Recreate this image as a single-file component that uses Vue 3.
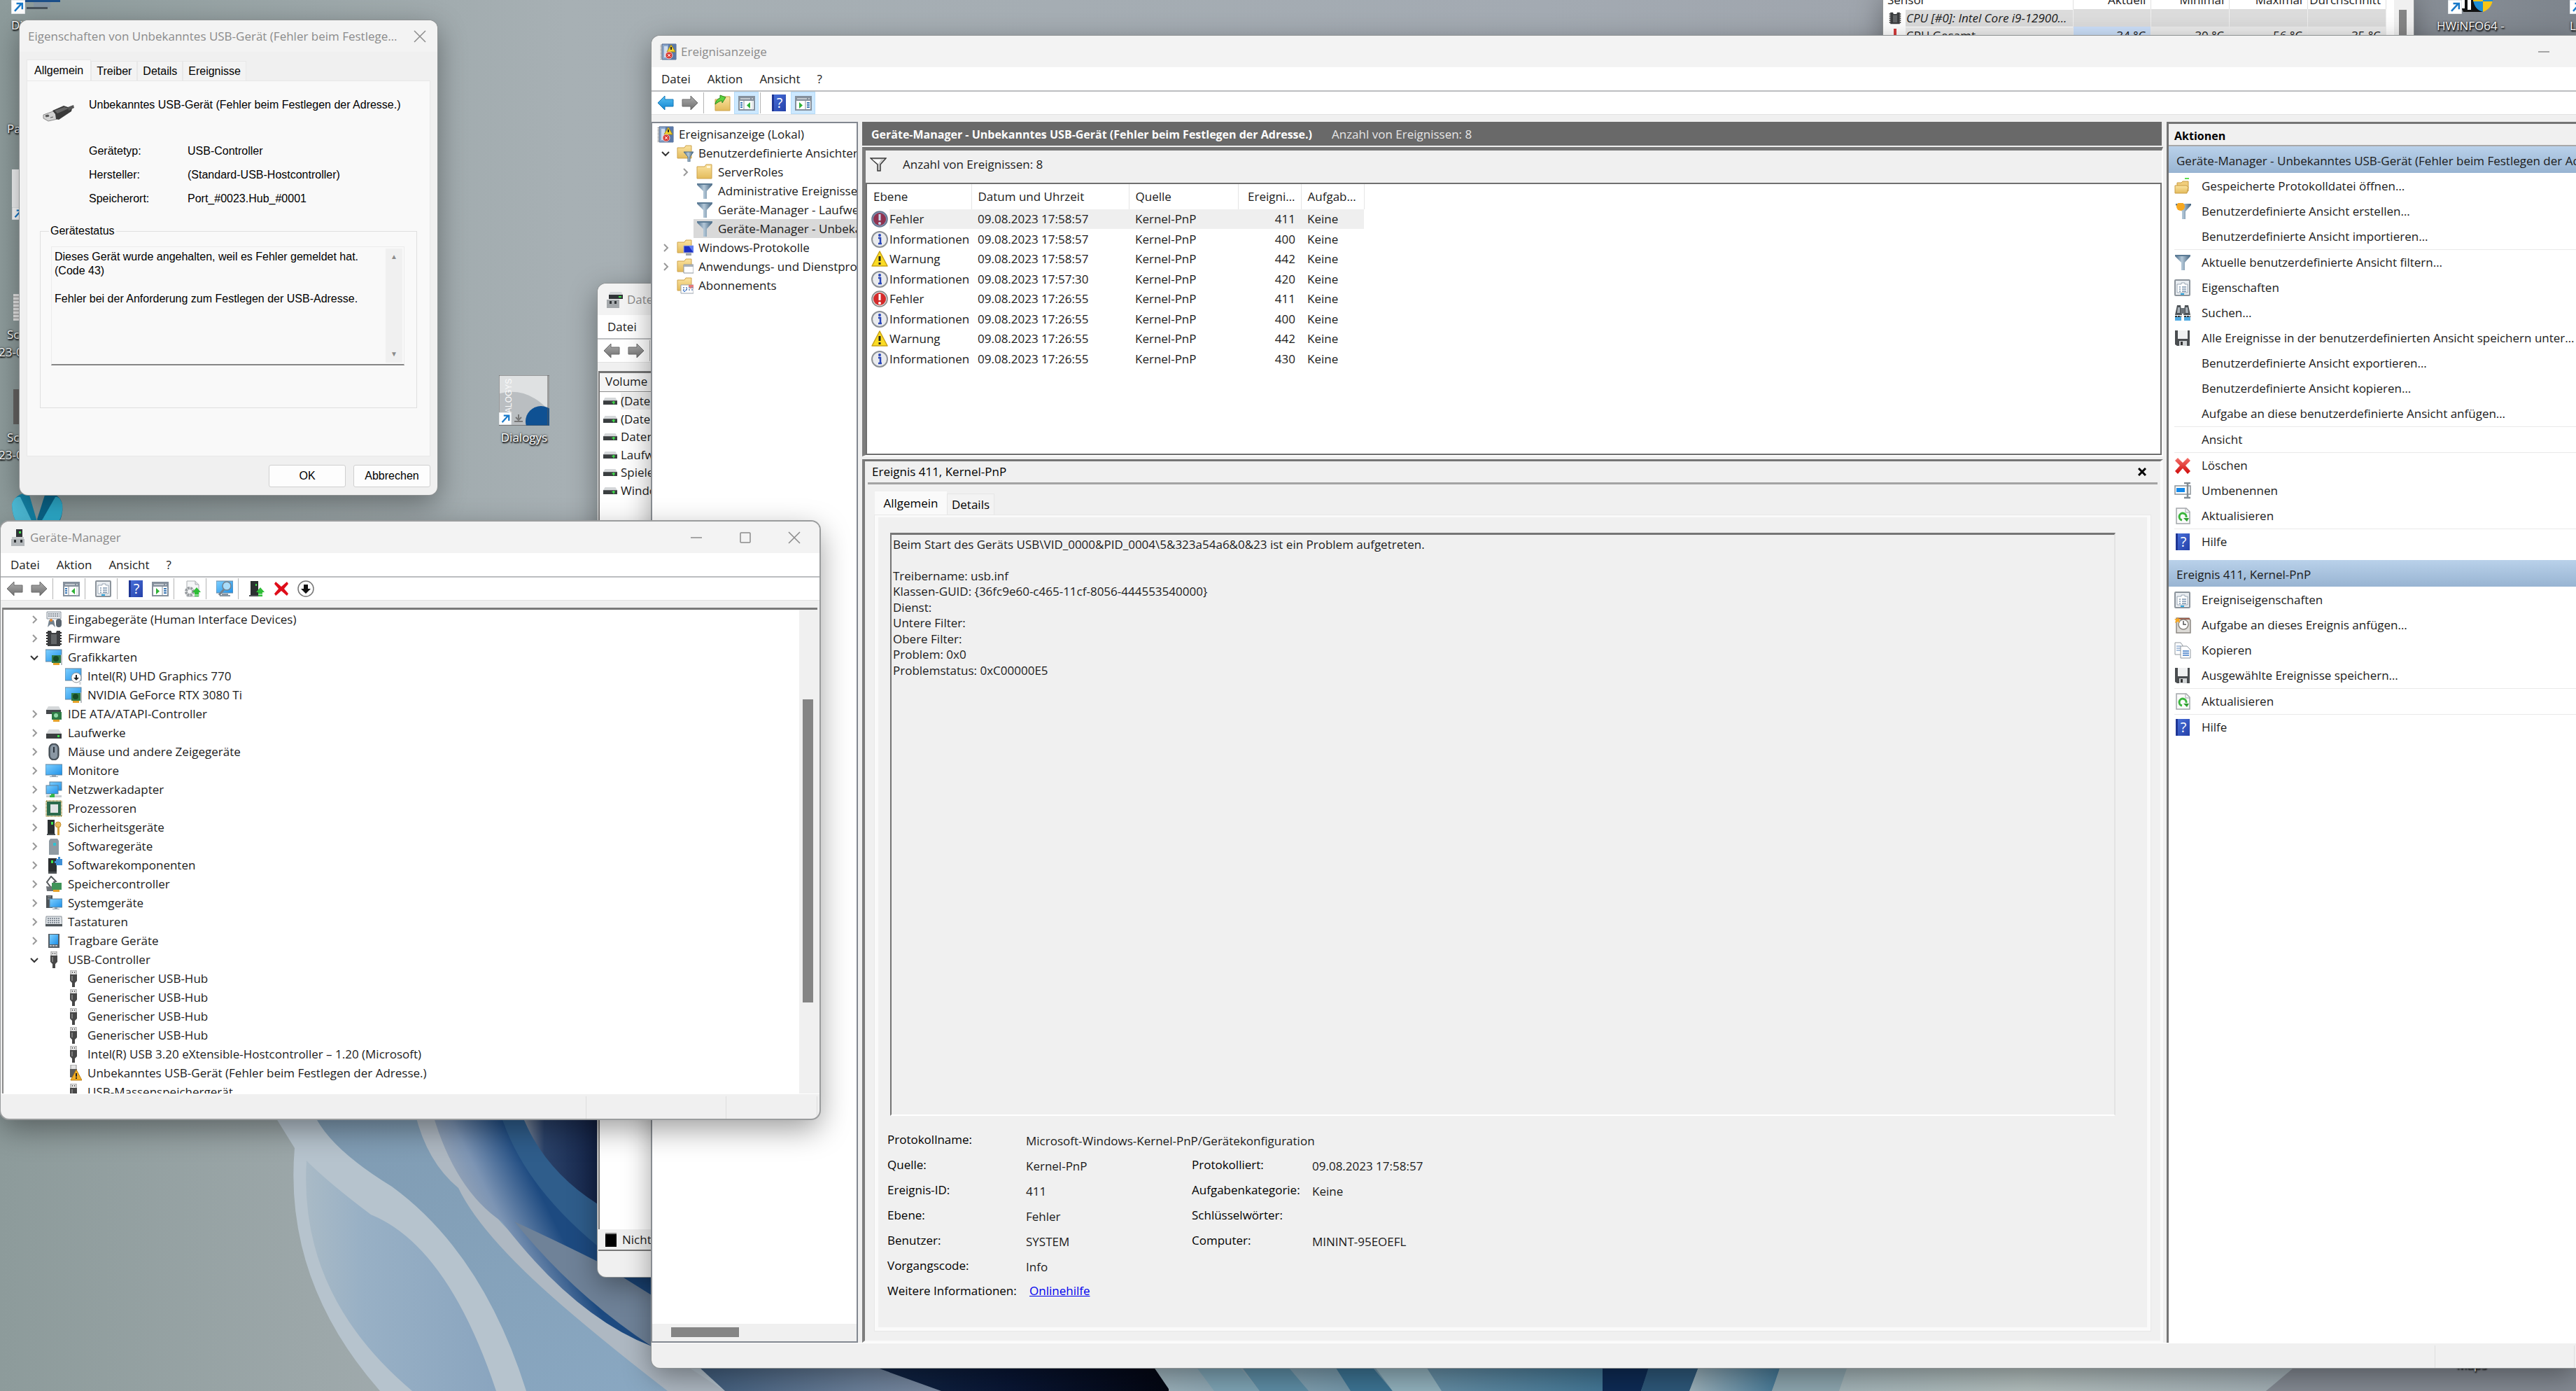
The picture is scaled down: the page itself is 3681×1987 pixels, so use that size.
<script setup>
const tabs = ['Allgemein', 'Treiber', 'Details', 'Ereignisse']

const deviceInfo = [
  ['Gerätetyp:', 'USB-Controller'],
  ['Hersteller:', '(Standard-USB-Hostcontroller)'],
  ['Speicherort:', 'Port_#0023.Hub_#0001'],
]

const statusText =
  'Dieses Gerät wurde angehalten, weil es Fehler gemeldet hat.\n(Code 43)\n\nFehler bei der Anforderung zum Festlegen der USB-Adresse.'

const menu = ['Datei', 'Aktion', 'Ansicht', '?']

const deviceTools = [
  ['back', 'Zurück'], ['fwd', 'Vorwärts'], null,
  ['panel-l', 'Konsolenstruktur'], null,
  ['props', 'Eigenschaften'], null,
  ['help', 'Hilfe'], ['panel-r', 'Aktionsbereich'], null,
  ['update', 'Treiber aktualisieren'], null,
  ['scan', 'Nach geänderter Hardware suchen'], null,
  ['addhw', 'Gerät aktivieren'], ['redx', 'Gerät deinstallieren'], ['down', 'Gerät deaktivieren'],
]

const devices = [
  ['hid', 'Eingabegeräte (Human Interface Devices)'],
  ['chip', 'Firmware'],
  ['gpu', 'Grafikkarten', 'open'],
  ['gpudown', 'Intel(R) UHD Graphics 770', 'child'],
  ['gpu', 'NVIDIA GeForce RTX 3080 Ti', 'child'],
  ['ide', 'IDE ATA/ATAPI-Controller'],
  ['drive', 'Laufwerke'],
  ['mouse', 'Mäuse und andere Zeigegeräte'],
  ['monitor', 'Monitore'],
  ['net', 'Netzwerkadapter'],
  ['cpu', 'Prozessoren'],
  ['sec', 'Sicherheitsgeräte'],
  ['swdev', 'Softwaregeräte'],
  ['swcomp', 'Softwarekomponenten'],
  ['mem', 'Speichercontroller'],
  ['sys', 'Systemgeräte'],
  ['kbd', 'Tastaturen'],
  ['phone', 'Tragbare Geräte'],
  ['usb', 'USB-Controller', 'open'],
  ['usb', 'Generischer USB-Hub', 'child'],
  ['usb', 'Generischer USB-Hub', 'child'],
  ['usb', 'Generischer USB-Hub', 'child'],
  ['usb', 'Generischer USB-Hub', 'child'],
  ['usb', 'Intel(R) USB 3.20 eXtensible-Hostcontroller – 1.20 (Microsoft)', 'child'],
  ['usbwarn', 'Unbekanntes USB-Gerät (Fehler beim Festlegen der Adresse.)', 'child'],
  ['usb', 'USB-Massenspeichergerät', 'child'],
]

const volumes = ['(Datenträger 0 Partition 1)', '(Datenträger 0 Partition 4)', 'Daten', 'Laufwerk', 'Spiele', 'Windows']

const eventTree = [
  { icon: 'log', text: 'Ereignisanzeige (Lokal)', level: 0 },
  { icon: 'ffilter', text: 'Benutzerdefinierte Ansichten', level: 1, mark: 'open' },
  { icon: 'folder', text: 'ServerRoles', level: 2, mark: 'closed' },
  { icon: 'funnel', text: 'Administrative Ereignisse', level: 2 },
  { icon: 'funnel', text: 'Geräte-Manager - Laufwerke', level: 2 },
  { icon: 'funnel', text: 'Geräte-Manager - Unbekanntes', level: 2, selected: true },
  { icon: 'fwin', text: 'Windows-Protokolle', level: 1, mark: 'closed' },
  { icon: 'fapp', text: 'Anwendungs- und Dienstprotokolle', level: 1, mark: 'closed' },
  { icon: 'fcal', text: 'Abonnements', level: 1 },
]

const events = [
  ['errsel', 'Fehler', '09.08.2023 17:58:57', 411],
  ['info', 'Informationen', '09.08.2023 17:58:57', 400],
  ['warn', 'Warnung', '09.08.2023 17:58:57', 442],
  ['info', 'Informationen', '09.08.2023 17:57:30', 420],
  ['error', 'Fehler', '09.08.2023 17:26:55', 411],
  ['info', 'Informationen', '09.08.2023 17:26:55', 400],
  ['warn', 'Warnung', '09.08.2023 17:26:55', 442],
  ['info', 'Informationen', '09.08.2023 17:26:55', 430],
]

const message = [
  'Beim Start des Geräts USB\\VID_0000&PID_0004\\5&323a54a6&0&23 ist ein Problem aufgetreten.',
  '',
  'Treibername: usb.inf',
  'Klassen-GUID: {36fc9e60-c465-11cf-8056-444553540000}',
  'Dienst:',
  'Untere Filter:',
  'Obere Filter:',
  'Problem: 0x0',
  'Problemstatus: 0xC00000E5',
]

const fields = [
  ['Protokollname:', 'Microsoft-Windows-Kernel-PnP/Gerätekonfiguration'],
  ['Quelle:', 'Kernel-PnP', 'Protokolliert:', '09.08.2023 17:58:57'],
  ['Ereignis-ID:', '411', 'Aufgabenkategorie:', 'Keine'],
  ['Ebene:', 'Fehler', 'Schlüsselwörter:', ''],
  ['Benutzer:', 'SYSTEM', 'Computer:', 'MININT-95EOEFL'],
  ['Vorgangscode:', 'Info'],
]

const actionGroups = [
  {
    title: 'Geräte-Manager - Unbekanntes USB-Gerät (Fehler beim Festlegen der Adresse.)',
    items: [
      ['openlog', 'Gespeicherte Protokolldatei öffnen…'],
      ['funnelnew', 'Benutzerdefinierte Ansicht erstellen…'],
      ['', 'Benutzerdefinierte Ansicht importieren…'],
      null,
      ['funnel', 'Aktuelle benutzerdefinierte Ansicht filtern…'],
      ['props', 'Eigenschaften'],
      ['find', 'Suchen…'],
      ['save', 'Alle Ereignisse in der benutzerdefinierten Ansicht speichern unter…'],
      ['', 'Benutzerdefinierte Ansicht exportieren…'],
      ['', 'Benutzerdefinierte Ansicht kopieren…'],
      ['', 'Aufgabe an diese benutzerdefinierte Ansicht anfügen…'],
      null,
      ['', 'Ansicht'],
      null,
      ['delete', 'Löschen'],
      ['rename', 'Umbenennen'],
      ['refresh', 'Aktualisieren'],
      null,
      ['help', 'Hilfe'],
    ],
  },
  {
    title: 'Ereignis 411, Kernel-PnP',
    items: [
      ['props', 'Ereigniseigenschaften'],
      ['task', 'Aufgabe an dieses Ereignis anfügen…'],
      ['copy', 'Kopieren'],
      ['save', 'Ausgewählte Ereignisse speichern…'],
      null,
      ['refresh', 'Aktualisieren'],
      null,
      ['help', 'Hilfe'],
    ],
  },
]
</script>

<template>
  <div class="desktop">
    <svg class="wallpaper" viewBox="0 0 3681 1987" preserveAspectRatio="none" aria-hidden="true">
      <defs>
        <linearGradient id="w-base" x1="0" x2="1" y1="0" y2="0">
          <stop offset="0" stop-color="#8d9b9b" /><stop offset=".12" stop-color="#9ca7a9" />
          <stop offset=".22" stop-color="#a7b0b4" /><stop offset=".6" stop-color="#a3aab2" />
          <stop offset=".85" stop-color="#9ba0a8" /><stop offset="1" stop-color="#7d848c" />
        </linearGradient>
        <linearGradient id="w-petal" x1="0" x2="1" y1="0" y2="0">
          <stop offset="0" stop-color="#a9bac6" /><stop offset=".3" stop-color="#98b0c5" /><stop offset="1" stop-color="#8aa5bf" />
        </linearGradient>
        <linearGradient id="w-petal2" x1="0" x2="1" y1="0" y2="1">
          <stop offset="0" stop-color="#7f9bb2" /><stop offset="1" stop-color="#8aa8c2" />
        </linearGradient>
        <linearGradient id="w-blue" gradientUnits="userSpaceOnUse" x1="620" x2="740" y1="1700" y2="1640">
          <stop offset="0" stop-color="#aab0b8" /><stop offset=".5" stop-color="#7d95b4" /><stop offset="1" stop-color="#1d4a80" />
        </linearGradient>
        <linearGradient id="w-navy" x1="0" x2="1" y1="0" y2="0">
          <stop offset="0" stop-color="#8c97a6" /><stop offset=".3" stop-color="#2b4269" /><stop offset="1" stop-color="#142449" />
        </linearGradient>
        <linearGradient id="w-slate" x1="0" x2="1" y1="0" y2="0">
          <stop offset="0" stop-color="#3d5a7a" /><stop offset=".6" stop-color="#6d829c" /><stop offset="1" stop-color="#8390a6" />
        </linearGradient>
        <linearGradient id="w-black" x1="0" x2="1" y1="0" y2="0">
          <stop offset="0" stop-color="#13294a" /><stop offset=".5" stop-color="#091634" /><stop offset="1" stop-color="#030612" />
        </linearGradient>
        <linearGradient id="w-fan" x1="0" x2="1" y1="0" y2="0">
          <stop offset="0" stop-color="#9fb4bd" /><stop offset="1" stop-color="#3f7595" />
        </linearGradient>
        <linearGradient id="w-pale" x1="0" x2="1" y1="0" y2="0">
          <stop offset="0" stop-color="#a5b6ba" /><stop offset=".4" stop-color="#b4c0bf" /><stop offset="1" stop-color="#a2afb6" />
        </linearGradient>
      </defs>
      <rect width="3681" height="1987" fill="url(#w-base)" />
      <path d="M390 1590L421 1640Q405 1830 543 1987H1100V1590Z" fill="#b6c3cd" />
      <path d="M438 1658Q426 1850 589 1987H709Q640 1780 530 1735Q470 1690 438 1658Z" fill="url(#w-petal)" />
      <path d="M448 1590Q470 1640 560 1695Q690 1790 752 1987H960L593 1590Z" fill="url(#w-petal2)" />
      <path d="M593 1590Q610 1660 655 1697Q690 1770 821 1880Q880 1930 954 1987H1036Q900 1900 788 1813Q660 1710 622 1590Z" fill="#aeb8c2" />
      <path d="M618 1590Q650 1700 717 1745Q820 1880 931 1923V1590Z" fill="url(#w-blue)" />
      <path d="M715 1590Q745 1690 854 1780V1590Z" fill="#2f5d8b" />
      <path d="M745 1590Q775 1670 854 1720V1590Z" fill="url(#w-navy)" />
      <path d="M735 1745Q790 1770 854 1802L931 1850V1923Q820 1850 735 1745Z" fill="#6f8298" />
      <path d="M985 1940H1400V1987H1036Z" fill="url(#w-slate)" />
      <path d="M1215 1940H1670V1987H1345Z" fill="url(#w-black)" />
      <path d="M1640 1940L1672 1987H2320V1940Z" fill="url(#w-fan)" />
      <path d="M1700 1940L1735 1987H1800L1760 1940Z" fill="#7fa5b6" />
      <path d="M1765 1940L1800 1987H1870L1830 1940Z" fill="#5e8ea6" />
      <path d="M1900 1940L1930 1987H1990L1950 1940Z" fill="#3d7595" />
      <path d="M1955 1940L1990 1987H2060L2030 1940Z" fill="#93b3bf" />
      <path d="M2290 1940H2362L2345 1987H2290Z" fill="#0e2b55" />
      <path d="M2360 1940H2432L2415 1987H2345Z" fill="#2e587a" />
      <path d="M2432 1940H2550L2532 1987H2414Z" fill="url(#w-fan)" />
      <path d="M2548 1940H2646L2628 1987H2532Z" fill="#8fa8b1" />
      <path d="M2644 1940H3300L3238 1987H2628Z" fill="url(#w-pale)" />
      <path d="M3294 1940H3681V1987H3238Z" fill="#858b94" />
    </svg>

    <!-- icon sheet -->
    <svg class="sheet" aria-hidden="true">
      <defs>
        <linearGradient id="g-screen" x1="0" y1="0" x2="1" y2="1"><stop offset="0" stop-color="#7fd0ff" /><stop offset="1" stop-color="#1e90e8" /></linearGradient>
        <linearGradient id="g-fold" x1="0" y1="0" x2="0" y2="1"><stop offset="0" stop-color="#fbe3a0" /><stop offset="1" stop-color="#e3bb5c" /></linearGradient>
        <linearGradient id="g-fun" x1="0" y1="0" x2="1" y2="0"><stop offset="0" stop-color="#4a6c8a" /><stop offset=".45" stop-color="#b4c8d8" /><stop offset="1" stop-color="#3f5f7b" /></linearGradient>
        <linearGradient id="g-arrow" x1="0" y1="0" x2="0" y2="1"><stop offset="0" stop-color="#adadad" /><stop offset="1" stop-color="#6f6f6f" /></linearGradient>
        <linearGradient id="g-barrow" x1="0" y1="0" x2="0" y2="1"><stop offset="0" stop-color="#5cc4f5" /><stop offset="1" stop-color="#0f83cf" /></linearGradient>
        <linearGradient id="g-red" x1="0" y1="0" x2="0" y2="1"><stop offset="0" stop-color="#f4706a" /><stop offset="1" stop-color="#cf0a0a" /></linearGradient>
        <linearGradient id="g-book" x1="0" y1="0" x2="1" y2="1"><stop offset="0" stop-color="#4a72dc" /><stop offset="1" stop-color="#2440a8" /></linearGradient>
      </defs>
      <symbol id="i-back" viewBox="0 0 24 24"><path d="M1 12L11 2v5h12v10H11v5z" fill="url(#g-arrow)" stroke="#6a6a6a" /></symbol>
      <symbol id="i-fwd" viewBox="0 0 24 24"><path d="M23 12L13 2v5H1v10h12v5z" fill="url(#g-arrow)" stroke="#6a6a6a" /></symbol>
      <symbol id="i-backblue" viewBox="0 0 24 24"><path d="M1 12L11 2v5h12v10H11v5z" fill="url(#g-barrow)" stroke="#1478b8" /></symbol>
      <symbol id="i-panel-l" viewBox="0 0 24 24"><rect x="1" y="3" width="22" height="19" fill="#fff" stroke="#85909c" stroke-width="2" /><path d="M1 3h22v6H1z" fill="#85909c" /><path d="M3 6h14M19 6h2" stroke="#fff" /><path d="M8 9v13" stroke="#85909c" /><path d="M3 12h3M3 15h3M3 18h3" stroke="#3b78b5" stroke-width="2" /><path d="M17 11v9l-5-4.500z" fill="#2eb135" /><path d="M20 9v13" stroke="#c3cad1" /></symbol>
      <symbol id="i-panel-r" viewBox="0 0 24 24"><rect x="1" y="3" width="22" height="19" fill="#fff" stroke="#85909c" stroke-width="2" /><path d="M1 3h22v6H1z" fill="#85909c" /><path d="M3 6h14M19 6h2" stroke="#fff" /><path d="M15 9v13" stroke="#85909c" /><path d="M17 12h4M17 15h4M17 18h4" stroke="#3b78b5" stroke-width="2" /><path d="M6 11v9l5-4.500z" fill="#2eb135" /></symbol>
      <symbol id="i-props" viewBox="0 0 24 24"><rect x="1" y="1" width="21" height="22" rx="1" fill="#e9edf1" stroke="#8b939b" stroke-width="2" /><path d="M4 7h6v-2h5v2h4v12H4z" fill="#fff" stroke="#9aa7b5" /><path d="M7 11h2M11 11h6M7 14h2M11 14h6M7 17h2M11 17h6" stroke="#7a93ad" stroke-width="1.500" /><path d="M9 21h5" stroke="#2fa7e0" stroke-width="2" /></symbol>
      <symbol id="i-help" viewBox="0 0 24 24"><path d="M2 0h20v24H2z" fill="url(#g-book)" /><path d="M2 0h3v24H2z" fill="#1f3694" /><text x="13" y="19" text-anchor="middle" font-family="Open Sans, sans-serif" font-size="20" fill="#fff">?</text></symbol>
      <symbol id="i-update" viewBox="0 0 24 24"><path d="M4 1h12l5 5v17H4z" fill="#f5f6f7" stroke="#a9adb1" /><path d="M16 1v5h5" fill="#dde0e3" stroke="#a9adb1" /><circle cx="8" cy="16" r="5" fill="none" stroke="#979b9f" stroke-width="4" stroke-dasharray="3 1" /><path d="M18 10l6 7h-3v6h-6v-6h-3z" fill="#2ebd36" /><path d="M15 21h6" stroke="#fff" /></symbol>
      <symbol id="i-scan" viewBox="0 0 24 24"><rect x="0" y="1" width="24" height="17" fill="url(#g-screen)" stroke="#6c8aa3" /><path d="M8 19h9v2h3v2H5v-2h3z" fill="#8795a2" /><circle cx="15" cy="8" r="6" fill="#a9dcfa" stroke="#73828f" stroke-width="1.500" /><path d="M11 13l-7 8" stroke="#73828f" stroke-width="3" /></symbol>
      <symbol id="i-addhw" viewBox="0 0 24 24"><path d="M3 1h11v20H3z" fill="#2b2f31" /><path d="M1 21h14v2H1z" fill="#4b5053" /><path d="M10 5h2v3h-2z" fill="#3fe04a" /><path d="M17 10l6 7h-3v6h-6v-6h-3z" fill="#2ebd36" /><path d="M14 20h6" stroke="#fff" /></symbol>
      <symbol id="i-redx" viewBox="0 0 24 24"><path d="M4 2l8 7 8-7 2 3-6 7 6 7-2 3-8-7-8 7-2-3 6-7-6-7z" fill="#df0d1a" /></symbol>
      <symbol id="i-down" viewBox="0 0 24 24"><circle cx="12" cy="12" r="11" fill="#fff" stroke="#777" stroke-width="1.500" /><path d="M9 6h6v6h4l-7 7-7-7h4z" fill="#111" /></symbol>
      <symbol id="i-hid" viewBox="0 0 24 24"><path d="M2 1h20v10H2z" fill="#e3e6ea" stroke="#8d969f" /><path d="M4 4h16M4 7h16" stroke="#8d969f" stroke-dasharray="2 1" stroke-width="2" /><path d="M3 23l2-10h7l2 10-4-4H7z" fill="#74828f" /><circle cx="8" cy="13" r="2" fill="#e2852f" /><rect x="15" y="11" width="8" height="12" rx="4" fill="#59636d" /></symbol>
      <symbol id="i-chip" viewBox="0 0 24 24"><path d="M3 1h5l1 3h6l1-3h5v22H3z" fill="#3b3d3f" /><path d="M2 3v20M22 3v20" stroke="#222" stroke-width="2" stroke-dasharray="2 2" /><path d="M8 6h8v14H8z" fill="#626567" /></symbol>
      <symbol id="i-gpu" viewBox="0 0 24 24"><rect x="0" y="1" width="23" height="17" fill="url(#g-screen)" stroke="#63829c" /><path d="M9 9h14v11H9z" fill="#2f7a44" /><circle cx="15" cy="14" r="4" fill="#174a26" /><path d="M11 20h9v3h-9z" fill="#e6a32a" /><path d="M23 8v15" stroke="#b9bec2" stroke-width="2" /></symbol>
      <symbol id="i-gpudown" viewBox="0 0 24 24"><rect x="0" y="1" width="23" height="17" fill="url(#g-screen)" stroke="#63829c" /><path d="M20 20h3v4h-3z" fill="#d8dcdf" /><circle cx="16" cy="14" r="7" fill="#fff" stroke="#8b9094" /><path d="M15 10h2v4h3l-4 4-4-4h3z" fill="#222" /></symbol>
      <symbol id="i-ide" viewBox="0 0 24 24"><path d="M4 1h15l3 5H1z" fill="#d5d8da" /><path d="M1 6h21v6H1z" fill="#45494c" /><path d="M9 9h14v11H9z" fill="#2f7a44" /><circle cx="15" cy="14" r="3" fill="#8fd8a4" /><path d="M11 20h9v3h-9z" fill="#e6a32a" /></symbol>
      <symbol id="i-drive" viewBox="0 0 24 24"><path d="M5 7h14l4 6H1z" fill="#d5d8da" /><path d="M1 13h22v7H1z" fill="#3a3e40" /><path d="M17 15h3v3h-3z" fill="#3fe04a" /></symbol>
      <symbol id="i-vol" viewBox="0 0 24 24"><path d="M3 6h18l3 5H0z" fill="#d5d8da" /><path d="M0 11h24v7H0z" fill="#3a3e40" /><path d="M15 14h5M18 12v5" stroke="#3fe04a" stroke-width="2" /></symbol>
      <symbol id="i-mouse" viewBox="0 0 24 24"><rect x="5" y="0" width="14" height="24" rx="7" fill="#56616b" stroke="#2b3238" /><rect x="7" y="2" width="10" height="20" rx="5" fill="#8a97a3" /><path d="M12 5v8" stroke="#29313a" stroke-width="2" /></symbol>
      <symbol id="i-monitor" viewBox="0 0 24 24"><rect x="0" y="3" width="24" height="15" fill="url(#g-screen)" stroke="#5e8099" /><path d="M9 18h6v2h3v1H6v-1h3z" fill="#8fa0ae" /></symbol>
      <symbol id="i-net" viewBox="0 0 24 24"><rect x="6" y="1" width="17" height="12" fill="url(#g-screen)" stroke="#5e8099" /><rect x="1" y="6" width="17" height="12" fill="url(#g-screen)" stroke="#5e8099" /><path d="M1 20h22v3H1z" fill="#c9ced2" /><path d="M8 18h5v5H6v-3h2z" fill="#34b54a" /></symbol>
      <symbol id="i-cpu" viewBox="0 0 24 24"><rect x="1" y="1" width="22" height="22" fill="none" stroke="#9b8c3c" stroke-width="2" stroke-dasharray="1 1" /><rect x="2" y="2" width="20" height="20" fill="#2c6b4d" /><rect x="7" y="6" width="11" height="12" fill="#e1e4e5" /></symbol>
      <symbol id="i-sec" viewBox="0 0 24 24"><path d="M3 1h10v20H3z" fill="#2b2f31" /><path d="M2 21h12v2H2z" fill="#4b5053" /><path d="M8 4h3v4H8z" fill="#3fe04a" /><circle cx="18" cy="8" r="4" fill="#e9bb5c" stroke="#c48d2c" /><path d="M17 12h3v11h-3z" fill="#dba43c" /></symbol>
      <symbol id="i-swdev" viewBox="0 0 24 24"><path d="M7 1h10l2 3v20H5V4z" fill="#8f9aa2" /><path d="M11 7h4v4h-4z" fill="#2fc2d2" /></symbol>
      <symbol id="i-swcomp" viewBox="0 0 24 24"><path d="M4 2h12v19H4z" fill="#2b2f31" /><path d="M4 21h12v3H4z" fill="#4b5053" /><path d="M8 5h3v4H8z" fill="#3fe04a" /><path d="M15 3h3V0h3v3h3v9h-9V9h-2V6h2z" fill="#3e8fd6" /></symbol>
      <symbol id="i-mem" viewBox="0 0 24 24"><path d="M8 1l7 7-3 1 2 3-6 5-6-8z" fill="none" stroke="#55595c" stroke-width="2" /><path d="M1 15l10 1v6H2z" fill="#6e7377" /><path d="M9 10h14v10H9z" fill="#3f9458" /><path d="M11 20h9v3h-9z" fill="#e6a32a" /></symbol>
      <symbol id="i-sys" viewBox="0 0 24 24"><path d="M1 1h9v18H1z" fill="#4d5357" /><path d="M3 3h5M3 6h5" stroke="#a7adb1" /><rect x="6" y="6" width="18" height="12" fill="url(#g-screen)" stroke="#5e8099" /><path d="M13 18h4v2h3v1h-10v-1h3z" fill="#8fa0ae" /></symbol>
      <symbol id="i-kbd" viewBox="0 0 24 24"><path d="M1 4h22l1 14H0z" fill="#dfe3e7" stroke="#8a929a" /><path d="M3 7h18M3 10h18M3 13h18" stroke="#87919b" stroke-width="2" stroke-dasharray="2 1" /><path d="M0 15h24v3H0z" fill="#4d5357" /></symbol>
      <symbol id="i-phone" viewBox="0 0 24 24"><rect x="4" y="2" width="16" height="20" fill="#555d64" /><rect x="6" y="3" width="12" height="14" fill="url(#g-screen)" /><path d="M6 19h12" stroke="#b7bec4" stroke-width="2" stroke-dasharray="3 1" /></symbol>
      <symbol id="i-usb" viewBox="0 0 24 24"><path d="M8 0h8v7H8z" fill="#e3e3e3" stroke="#8d8d8d" /><path d="M10 2h1v2h-1zM13 2h1v2h-1z" fill="#555" /><path d="M7 6h10v9l-3 3v6h-4v-6l-3-3z" fill="#474747" /><path d="M9 8h2v7H9z" fill="#7c7c7c" /></symbol>
      <symbol id="i-usbwarn" viewBox="0 0 24 24"><path d="M8 0h8v7H8z" fill="#e3e3e3" stroke="#8d8d8d" /><path d="M7 6h10v9l-3 3H7z" fill="#5b5b5b" /><path d="M16 7l8 15H8z" fill="#f2ae24" stroke="#b97b0c" /><path d="M16 12v5M16 18v2" stroke="#222" stroke-width="2" /></symbol>
      <symbol id="i-log" viewBox="0 0 24 24"><path d="M3 1h20v22H3z" fill="#8ba7cc" stroke="#4c6690" /><path d="M12 1h11v22H12z" fill="#5b79a8" /><path d="M6 4h5v16H6z" fill="#cfdcee" /><path d="M2 2v21" stroke="#999" stroke-width="3" stroke-dasharray="1 1" /><path d="M16 2l6 10H10z" fill="#f3d32d" stroke="#ad8a12" /><path d="M16 5v4" stroke="#222" stroke-width="2" /><circle cx="13" cy="17" r="5" fill="#d83a34" stroke="#f4c9c7" /><path d="M11 15l4 4M15 15l-4 4" stroke="#fff" /></symbol>
      <symbol id="i-folder" viewBox="0 0 24 24"><path d="M1 4h11l2-3h8v20H1z" fill="url(#g-fold)" stroke="#cda24a" /><path d="M15 3h5v3h-5z" fill="#fff6d8" /></symbol>
      <symbol id="i-ffilter" viewBox="0 0 24 24"><path d="M1 4h10l2-3h8v18H1z" fill="url(#g-fold)" stroke="#cda24a" /><path d="M10 10h14l-5 7v7h-3v-7z" fill="url(#g-fun)" stroke="#4f6f8b" /></symbol>
      <symbol id="i-fwin" viewBox="0 0 24 24"><path d="M1 4h10l2-3h8v18H1z" fill="url(#g-fold)" stroke="#cda24a" /><path d="M10 9h14v10H10z" fill="#1b2fc4" stroke="#a9b3d8" /><path d="M17 9h7v10z" fill="#5f7cf0" /><path d="M13 20h8v3h-8z" fill="#9ea5ab" /></symbol>
      <symbol id="i-fapp" viewBox="0 0 24 24"><path d="M1 4h10l2-3h8v18H1z" fill="url(#g-fold)" stroke="#cda24a" /><path d="M10 9h14v12H10z" fill="#fff" stroke="#8b939b" /><path d="M10 9h14v3H10z" fill="#a7afb7" /></symbol>
      <symbol id="i-fcal" viewBox="0 0 24 24"><path d="M1 4h10l2-3h8v18H1z" fill="url(#g-fold)" stroke="#cda24a" /><path d="M6 11h18v12H6z" fill="#fff" stroke="#9aa3ac" /><path d="M17 11h7v5h-7z" fill="#e57a7a" /><path d="M9 15h14M9 18h14" stroke="#8aa0c4" stroke-dasharray="2 2" stroke-width="2" /><path d="M9 18l2 3 4-5" fill="none" stroke="#2a6bc8" /></symbol>
      <symbol id="i-folderup" viewBox="0 0 24 24"><path d="M2 7h10l2-4h9v20H2z" fill="url(#g-fold)" stroke="#cda24a" /><path d="M2 14c1-6 4-8 7-9V1l8 3-5 8V9c-4 0-6 2-10 5z" fill="#5dd13f" stroke="#2f8a1e" /></symbol>
      <symbol id="i-funnel" viewBox="0 0 24 24"><path d="M1 1h22v2l-8 9v11h-5V12L1 3z" fill="url(#g-fun)" /><path d="M1 1h22v2H1z" fill="#5b7b95" /></symbol>
      <symbol id="i-funnelgrey" viewBox="0 0 24 24"><path d="M1 3h22l-8 9v9h-4v-9z" fill="#cfcfcf" stroke="#3a3a3a" stroke-width="1.500" /><path d="M4 5h12l-4 6z" fill="#fff" /></symbol>
      <symbol id="i-funnelnew" viewBox="0 0 24 24"><path d="M2 1h22v2l-8 9v11h-5V12L2 3z" fill="url(#g-fun)" /><circle cx="9" cy="5" r="6" fill="#f6a821" /></symbol>
      <symbol id="i-error" viewBox="0 0 24 24"><circle cx="12" cy="12" r="11" fill="#d6d6d6" stroke="#858585" stroke-width="1.500" /><circle cx="12" cy="12" r="9" fill="#d42a2a" /><path d="M12 5v9" stroke="#fff" stroke-width="3" /><circle cx="12" cy="18" r="2" fill="#fff" /></symbol>
      <symbol id="i-errsel" viewBox="0 0 24 24"><circle cx="12" cy="12" r="11" fill="#7e93b4" stroke="#64748c" stroke-width="1.500" /><circle cx="12" cy="12" r="9" fill="#8f3250" /><path d="M12 5v9" stroke="#c5d5ea" stroke-width="3" /><circle cx="12" cy="18" r="2" fill="#c5d5ea" /></symbol>
      <symbol id="i-info" viewBox="0 0 24 24"><circle cx="12" cy="12" r="11" fill="#e9ebee" stroke="#8b8f94" stroke-width="2" /><circle cx="12" cy="6" r="2" fill="#2743b8" /><path d="M10 10h3v8M10 18h5" fill="none" stroke="#2743b8" stroke-width="2.500" /></symbol>
      <symbol id="i-warn" viewBox="0 0 24 24"><path d="M12 1l11 21H1z" fill="#fbdc24" stroke="#c9a116" stroke-width="1.500" stroke-linejoin="round" /><path d="M12 8v7M12 17v3" stroke="#222" stroke-width="3" /></symbol>
      <symbol id="i-openlog" viewBox="0 0 24 24"><path d="M4 7h6l2-2h8v14H4z" fill="#f0cd7c" stroke="#c99c42" /><path d="M1 11h16l3 2-2 9H1z" fill="url(#g-fold)" stroke="#c99c42" /><path d="M15 1h6" stroke="#5fdc50" stroke-width="2" /></symbol>
      <symbol id="i-find" viewBox="0 0 24 24"><path d="M4 1h5l2 14H1zM15 1h5l3 14H13z" fill="#4c5257" /><path d="M5 4h3v8H4zM16 4h3l1 8h-4z" fill="#aab2b9" /><path d="M9 5h6v8H9z" fill="#6b7278" /><path d="M1 17h9v6H1zM14 17h9v6h-9z" fill="#4fa9e0" /><path d="M1 17h9M14 17h9" stroke="#333" stroke-width="2" stroke-dasharray="3 1" /></symbol>
      <symbol id="i-save" viewBox="0 0 24 24"><path d="M1 1h21v22H4l-3-2z" fill="#4a4d50" /><path d="M5 1h14v12H5z" fill="#f0f1f2" /><path d="M7 16h11v7H7z" fill="#d0d3d5" /><path d="M9 17h3v5H9z" fill="#333" /></symbol>
      <symbol id="i-delete" viewBox="0 0 24 24"><path d="M5 1l7 7 7-7 4 4-7 7 7 8-4 4-7-8-7 8-4-4 7-8-7-7z" fill="url(#g-red)" /></symbol>
      <symbol id="i-rename" viewBox="0 0 24 24"><rect x="1" y="5" width="22" height="12" fill="#fff" stroke="#8a9299" stroke-width="1.500" /><path d="M3 8h12v6H3z" fill="#1489ea" /><path d="M14 1h9M14 22h9M19 1v21" stroke="#808a92" stroke-width="2.500" /></symbol>
      <symbol id="i-refresh" viewBox="0 0 24 24"><path d="M3 1h14l5 5v17H3z" fill="#fafafa" stroke="#a3a7ab" stroke-width="1.500" /><path d="M16 1v6h6" fill="none" stroke="#a3a7ab" /><path d="M11 18a5 5 0 1 1 6-4" fill="none" stroke="#3bb53c" stroke-width="3" /><path d="M13 15h8l-3 5z" fill="#2e9e30" /></symbol>
      <symbol id="i-task" viewBox="0 0 24 24"><path d="M3 2h18l2 3v18H3z" fill="#dcdad6" stroke="#8c8882" stroke-width="1.500" /><path d="M4 2h18v2H4z" fill="#9b5b4a" /><circle cx="13" cy="11" r="7" fill="#fff" stroke="#8c8882" stroke-width="1.500" /><path d="M13 6v5h4" fill="none" stroke="#555" stroke-width="1.500" /><path d="M5 0l1 3h3L7 5l1 4-3-2-4 2 1-4-2-2h4z" fill="#f7a823" /></symbol>
      <symbol id="i-copy" viewBox="0 0 24 24"><path d="M1 1h8l3 4v13H1z" fill="#fff" stroke="#8f979f" /><path d="M3 6h6M3 9h6M3 12h6" stroke="#5a87c0" /><path d="M9 6h9l5 5v12H9z" fill="#fff" stroke="#8f979f" /><path d="M12 13h9M12 16h9M12 19h9" stroke="#3976c4" stroke-width="1.500" /></symbol>
      <symbol id="i-devmgr" viewBox="0 0 24 24"><path d="M10 0h9v12h-9z" fill="#303437" /><path d="M14 3h3v3h-3z" fill="#3fe04a" /><path d="M4 11h17v4H4z" fill="#c6c9cb" /><path d="M3 14h19v10H3z" fill="#b3b7ba" /><path d="M7 15h3v4H7zM16 15h3v4h-3z" fill="#303437" /></symbol>
      <symbol id="i-diskmgr" viewBox="0 0 24 24"><path d="M6 1h16l2 4H4z" fill="#d5d8da" /><path d="M4 5h20v6H4z" fill="#303437" /><path d="M18 7h4v2h-4z" fill="#3fe04a" /><path d="M1 12h18v12H1z" fill="#a4a8ab" /><path d="M5 14h3v4H5zM12 14h3v4h-3z" fill="#303437" /></symbol>
      <symbol id="i-shortcut" viewBox="0 0 24 24"><path d="M0 0h24v24H0z" fill="#fff" stroke="#b9c4cb" /><path d="M6 19L17 7M9 6h10v10" fill="none" stroke="#1879c9" stroke-width="3" /></symbol>
      <symbol id="i-min" viewBox="0 0 24 24"><path d="M4 12h16" stroke="#8b8b8b" stroke-width="1.500" /></symbol>
      <symbol id="i-max" viewBox="0 0 24 24"><rect x="5" y="5" width="14" height="14" rx="1" fill="none" stroke="#8b8b8b" stroke-width="1.500" /></symbol>
      <symbol id="i-close" viewBox="0 0 24 24"><path d="M4 4l16 16M20 4L4 20" stroke="#8b8b8b" stroke-width="1.500" /></symbol>
    </svg>

    <!-- desktop shortcuts -->
    <div class="shortcut s-monitor">
      <svg width="72" height="24" viewBox="0 0 72 24"><path d="M18 0h52v3H18z" fill="#1c4f8a" /><path d="M32 3h24v8H32z" fill="#8695a3" /><path d="M22 10h30v3H22z" fill="#49535c" /></svg>
      <svg class="arrow" width="20" height="20"><use href="#i-shortcut" /></svg>
      <span>Di</span>
    </div>
    <div class="shortcut s-pa"><span>Pa</span></div>
    <div class="shortcut s-white">
      <div class="tile white"></div>
      <svg class="arrow" width="18" height="18"><use href="#i-shortcut" /></svg>
    </div>
    <div class="shortcut s-shot1"><div class="tile lines"></div><span>Sc</span><span class="second">23-0</span></div>
    <div class="shortcut s-shot2"><div class="tile dark"></div><span>Sc</span><span class="second">23-0</span></div>
    <div class="shortcut s-ribbon">
      <svg width="74" height="50" viewBox="0 0 74 50"><path d="M0 18Q6 2 24 2L38 50H10Q0 36 0 18z" fill="#1486ab" /><path d="M0 18Q4 6 12 8L32 50H10Q0 36 0 18z" fill="#4fc0dc" /><path d="M72 18Q68 2 48 2L36 40 44 50H64Q74 36 72 18z" fill="#0b6a90" /><path d="M72 18Q68 6 62 8L38 50H62Q74 36 72 18z" fill="#2fb4d6" /></svg>
    </div>
    <div class="shortcut s-dialogys">
      <svg width="72" height="72" viewBox="0 0 72 72">
        <path d="M0 0h72v72H0z" fill="#dfe1e2" stroke="#555" /><path d="M1 26Q40 16 71 50V71H1z" fill="#babec1" /><circle cx="60" cy="66" r="22" fill="#0f5193" /><path d="M70 0v72H0" fill="none" stroke="#555" />
        <text class="cover" x="-54" y="18" transform="rotate(-90)" font-family="Liberation Sans, sans-serif" font-size="12" fill="#fafafa">ALOGYS</text>
        <path d="M28 56v6M24 60l4 4 4-4M22 66h12" fill="none" stroke="#777" stroke-width="2" />
      </svg>
      <svg class="arrow" width="18" height="18"><use href="#i-shortcut" /></svg>
      <span>Dialogys</span>
    </div>
    <div class="shortcut s-hwinfo">
      <svg width="68" height="20" viewBox="0 0 68 20"><path d="M16 0h36v17H24z" fill="#111" /><path d="M20 0h6v12h-6zM30 0h5v14h-5z" fill="#fff" /><path d="M38 0h14v17Q40 14 38 0z" fill="#1f8ed6" /><path d="M52 0h14q-2 13-14 17z" fill="#f5c518" /><path d="M38 2h14V0h-14z" fill="#f5c518" /><path d="M52 2h14V0H52z" fill="#1f8ed6" /></svg>
      <svg class="arrow" width="20" height="20"><use href="#i-shortcut" /></svg>
      <span>HWiNFO64 -</span>
    </div>
    <div class="shortcut s-edge">
      <svg width="20" height="20"><use href="#i-shortcut" /></svg>
      <span>L</span>
    </div>
    <div class="shortcut s-maps"><span>Maps</span></div>

    <!-- sensor window -->
    <section class="window sensors">
      <table>
        <thead>
          <tr><th>Sensor</th><th>Aktuell</th><th>Minimal</th><th>Maximal</th><th>Durchschnitt</th></tr>
        </thead>
        <tbody>
          <tr class="cpu">
            <td><div><svg width="18" height="24"><use href="#i-chip" /></svg><i>CPU [#0]: Intel Core i9-12900…</i></div></td><td></td><td></td><td></td><td></td>
          </tr>
          <tr class="val">
            <td><div><b></b><span>CPU Gesamt</span></div></td><td class="now">34 °C</td><td>30 °C</td><td>56 °C</td><td>35 °C</td>
          </tr>
        </tbody>
      </table>
      <div class="sbar"><i></i></div>
    </section>

    <!-- disk management -->
    <section class="window disks">
      <header class="title"><svg width="24" height="24"><use href="#i-diskmgr" /></svg><span>Datenträgerverwaltung</span></header>
      <nav class="menu"><button type="button">Datei</button></nav>
      <div class="tools">
        <button type="button" aria-label="Zurück"><svg><use href="#i-back" /></svg></button>
        <button type="button" aria-label="Vorwärts"><svg><use href="#i-fwd" /></svg></button>
        <i class="sep"></i>
      </div>
      <div class="volumes">
        <div class="vhead">Volume</div>
        <ul><li v-for="v in volumes" :key="v"><svg width="20" height="20"><use href="#i-vol" /></svg><span>{{ v }}</span></li></ul>
      </div>
      <div class="legend"><i></i><span>Nicht zugeordnet</span></div>
      <footer></footer>
    </section>

    <!-- device properties -->
    <section class="window dialog">
      <header class="title">
        <span>Eigenschaften von Unbekanntes USB-Gerät (Fehler beim Festlege…</span>
        <button type="button" aria-label="Schließen"><svg width="24" height="24"><use href="#i-close" /></svg></button>
      </header>
      <div class="ptabs"><button v-for="(t, i) in tabs" :key="t" type="button" :class="{ on: i === 0 }">{{ t }}</button></div>
      <div class="page">
        <div class="device">
          <svg width="46" height="26" viewBox="0 0 46 26"><path d="M1 16l14-5 6 4v7L8 25l-7-4z" fill="#d2d2d2" stroke="#8a8a8a" /><path d="M4 17l4-1 1 2-4 1zM11 20l4-1" stroke="#555" fill="#555" /><path d="M14 10L30 3l12 4-1 4-18 12-4-1-1-7z" fill="#3a3a3a" /><path d="M36 5l8-3 1 4-8 4z" fill="#555" /><path d="M17 10l14-5 6 2-16 7z" fill="#666" /></svg>
          <span>Unbekanntes USB-Gerät (Fehler beim Festlegen der Adresse.)</span>
        </div>
        <dl><div v-for="r in deviceInfo" :key="r[0]"><dt>{{ r[0] }}</dt><dd>{{ r[1] }}</dd></div></dl>
        <fieldset>
          <legend>Gerätestatus</legend>
          <div class="status">
            <textarea readonly aria-label="Gerätestatus" :value="statusText"></textarea>
            <div class="sb"><span>▲</span><span>▼</span></div>
          </div>
        </fieldset>
      </div>
      <div class="buttons"><button type="button">OK</button><button type="button">Abbrechen</button></div>
    </section>

    <!-- event viewer -->
    <section class="window viewer">
      <header class="title">
        <svg width="24" height="24"><use href="#i-log" /></svg><span>Ereignisanzeige</span>
        <button type="button" aria-label="Minimieren"><svg width="24" height="24"><use href="#i-min" /></svg></button>
      </header>
      <nav class="menu"><button v-for="m in menu" :key="m" type="button">{{ m }}</button></nav>
      <div class="tools">
        <button type="button" aria-label="Zurück"><svg><use href="#i-backblue" /></svg></button>
        <button type="button" aria-label="Vorwärts"><svg><use href="#i-fwd" /></svg></button>
        <i class="sep"></i>
        <button type="button" class="gap" aria-label="Nach oben"><svg><use href="#i-folderup" /></svg></button>
        <button type="button" class="lit" aria-label="Konsolenstruktur"><svg><use href="#i-panel-l" /></svg></button>
        <i class="sep"></i>
        <button type="button" class="gap" aria-label="Hilfe"><svg><use href="#i-help" /></svg></button>
        <button type="button" class="lit" aria-label="Aktionsbereich"><svg><use href="#i-panel-r" /></svg></button>
      </div>
      <div class="main">
        <aside class="tree">
          <ul>
            <li v-for="n in eventTree" :key="n.text" :class="['l' + n.level, { sel: n.selected }]">
              <svg v-if="n.level" class="chev" width="16" height="16" viewBox="0 0 16 16">
                <path v-if="n.mark === 'open'" d="M3 6l5 5 5-5" stroke="#333" /><path v-else-if="n.mark" d="M6 3l5 5-5 5" stroke="#999" />
              </svg>
              <div class="node"><svg width="24" height="24"><use :href="'#i-' + n.icon" /></svg><span>{{ n.text }}</span></div>
            </li>
          </ul>
          <div class="hbar"><i></i></div>
        </aside>

        <div class="center">
          <h1><b>Geräte-Manager - Unbekanntes USB-Gerät (Fehler beim Festlegen der Adresse.)</b><span>Anzahl von Ereignissen: 8</span></h1>
          <div class="listpane">
            <div class="count"><svg width="24" height="24"><use href="#i-funnelgrey" /></svg><span>Anzahl von Ereignissen: 8</span></div>
            <div class="grid">
              <table>
                <thead><tr><th>Ebene</th><th>Datum und Uhrzeit</th><th>Quelle</th><th class="num">Ereigni…</th><th>Aufgab…</th></tr></thead>
                <tbody>
                  <tr v-for="(e, i) in events" :key="i" :class="{ sel: i === 0 }">
                    <td><div><svg width="24" height="24"><use :href="'#i-' + e[0]" /></svg><span>{{ e[1] }}</span></div></td>
                    <td>{{ e[2] }}</td><td>Kernel-PnP</td><td class="num">{{ e[3] }}</td><td>Keine</td>
                  </tr>
                </tbody>
              </table>
            </div>
          </div>
          <div class="detail">
            <div class="dhead"><span>Ereignis 411, Kernel-PnP</span><button type="button" aria-label="Schließen"><svg width="12" height="12" viewBox="0 0 12 12"><path d="M1 1l10 10M11 1L1 11" stroke="#000" stroke-width="3" /></svg></button></div>
            <div class="dtabs"><button type="button" class="on">Allgemein</button><button type="button">Details</button></div>
            <div class="dpage">
              <div class="msg"><p v-for="(l, i) in message" :key="i">{{ l }}</p></div>
              <div class="fields">
                <template v-for="f in fields" :key="f[0]">
                  <span>{{ f[0] }}</span><span class="v">{{ f[1] }}</span><span>{{ f[2] }}</span><span class="v">{{ f[3] }}</span>
                </template>
                <span>Weitere Informationen:</span><a href="#hilfe">Onlinehilfe</a>
              </div>
            </div>
          </div>
        </div>

        <aside class="actions">
          <h2>Aktionen</h2>
          <div v-for="g in actionGroups" :key="g.title" class="group">
            <h3>{{ g.title }}</h3>
            <template v-for="(a, i) in g.items" :key="i">
              <hr v-if="!a" />
              <button v-else type="button"><svg width="24" height="24"><use v-if="a[0]" :href="'#i-' + a[0]" /></svg><span>{{ a[1] }}</span></button>
            </template>
          </div>
        </aside>
      </div>
      <footer class="statusbar"><i></i></footer>
    </section>

    <!-- device manager -->
    <section class="window manager">
      <header class="title">
        <svg width="24" height="24"><use href="#i-devmgr" /></svg><span>Geräte-Manager</span>
        <button type="button" aria-label="Minimieren"><svg width="24" height="24"><use href="#i-min" /></svg></button>
        <button type="button" aria-label="Maximieren"><svg width="24" height="24"><use href="#i-max" /></svg></button>
        <button type="button" aria-label="Schließen"><svg width="24" height="24"><use href="#i-close" /></svg></button>
      </header>
      <nav class="menu"><button v-for="m in menu" :key="m" type="button">{{ m }}</button></nav>
      <div class="tools">
        <template v-for="(t, i) in deviceTools" :key="i">
          <i v-if="!t" class="sep"></i>
          <button v-else type="button" :class="{ gap: i > 2 && !deviceTools[i - 1] }" :aria-label="t[1]"><svg><use :href="'#i-' + t[0]" /></svg></button>
        </template>
      </div>
      <div class="devices">
        <ul>
          <li v-for="(d, i) in devices" :key="i" :class="{ child: d[2] === 'child' }">
            <svg v-if="d[2] !== 'child'" class="chev" width="16" height="16" viewBox="0 0 16 16">
              <path v-if="d[2] === 'open'" d="M3 6l5 5 5-5" stroke="#333" /><path v-else d="M6 3l5 5-5 5" stroke="#999" />
            </svg>
            <svg width="24" height="24"><use :href="'#i-' + d[0]" /></svg><span>{{ d[1] }}</span>
          </li>
        </ul>
        <div class="vbar"><i></i></div>
      </div>
      <footer class="statusbar"><i></i><i></i></footer>
    </section>
  </div>
</template>

<style>
body { overflow: hidden; }
</style>

<style scoped>
* { box-sizing: border-box; margin: 0; padding: 0; }
ul { list-style: none; }
button { font: inherit; color: inherit; background: none; border: 0; white-space: nowrap; }
i { font-style: normal; }
svg { flex: none; display: block; }

.desktop {
  position: relative;
  height: 100vh;
  overflow: hidden;
  background: #a3aab2;
  font: 17px/24px "Open Sans", "Noto Sans", sans-serif;
  color: #1b1b1b;
}
.wallpaper { position: absolute; width: 100%; height: 100%; }
.sheet { position: absolute; width: 0; height: 0; }

.shortcut { position: absolute; display: flex; flex-direction: column; color: #fff; white-space: nowrap; text-shadow: 1px 2px 2px #000, 0 0 3px #000; }
.shortcut .arrow { position: absolute; left: 0; bottom: 24px; }
.cover { text-shadow: none; }
.s-monitor { left: 16px; top: 0; }
.s-monitor .arrow { top: 0; }
.s-pa { left: 10px; top: 172px; }
.s-white { left: 17px; top: 242px; }
.s-white .arrow { bottom: 0; }
.tile { width: 72px; height: 72px; }
.white { background: #f4f5f6; }
.lines { height: 38px; margin: 0 0 8px 9px; background: repeating-linear-gradient(#e8e8e8 0 3px, #b5b5b5 3px 5px); }
.dark { height: 50px; margin: 0 0 7px 9px; background: #666463; }
.second { margin: 1px 0 0 -12px; }
.s-shot1 { left: 10px; top: 420px; }
.s-shot2 { left: 10px; top: 556px; }
.s-ribbon { left: 17px; top: 702px; }
.s-dialogys { left: 713px; top: 536px; align-items: center; gap: 5px; }
.s-dialogys .arrow { bottom: 30px; }
.s-hwinfo { left: 3482px; top: 0; gap: 5px; align-items: center; }
.s-hwinfo .arrow { left: 16px; top: 0; }
.s-edge { left: 3672px; top: 0; gap: 5px; }
.s-maps { left: 3510px; top: 1937px; }

.window {
  position: absolute;
  display: flex;
  flex-direction: column;
  overflow: hidden;
  background: #f0f0f0;
  border-radius: 12px;
  box-shadow: 0 0 0 1px #8d9192, 0 12px 40px rgba(0, 0, 0, .38);
}
.title { display: flex; align-items: center; height: 45px; flex: none; padding: 0 24px 0 12px; gap: 6px; background: #f3f3f3; color: #8b8b8b; white-space: nowrap; }
.title span { flex: 1; }
.title button { margin-left: 40px; }
.menu { display: flex; height: 35px; flex: none; align-items: center; gap: 24px; padding-left: 14px; background: #fff; border-bottom: 2px solid #bcbec0; }
.tools { display: flex; align-items: center; height: 33px; flex: none; padding-left: 2px; background: #fff; border-bottom: 1px solid #e2e2e2; }
.tools button { width: 35px; height: 32px; display: flex; align-items: center; justify-content: center; }
.tools svg { width: 24px; height: 24px; }
.tools .sep { width: 1px; height: 30px; background: #b5b5b5; margin-left: 2px; }
.tools .gap { margin-left: 8px; }
.tools .lit { background: #cce8ff; box-shadow: inset 0 0 0 1px #b5dcf8; }

.sensors { left: 2691px; top: -14px; width: 758px; height: 200px; flex-direction: row; border-radius: 0; background: #fff; }
.sensors table { width: 719px; border-collapse: collapse; table-layout: fixed; align-self: flex-start; }
.sensors th { font-weight: 400; height: 27px; text-align: right; padding: 0 7px 0 0; border-right: 1px solid #e0e0e0; line-height: 20px; }
.sensors th:first-child { width: 271px; text-align: left; padding-left: 6px; }
.sensors td { text-align: right; padding-right: 7px; line-height: 24px; height: 25px; border-right: 1px solid #efefef; background: #dcdcdc; }
.sensors td:first-child { text-align: left; background: none; padding: 0; }
.sensors td div { display: flex; align-items: center; padding-left: 8px; gap: 6px; height: 25px; }
.sensors td div i, .sensors td div span { flex: 1; background: #dcdcdc; padding-left: 1px; white-space: nowrap; overflow: hidden; }
.sensors td div i { font-style: italic; }
.sensors td b { width: 4px; height: 20px; margin: 0 7px; background: #d43c3c; }
.sensors .val td, .sensors .val td div span { background: #ececec; }
.sensors .val td:first-child { background: none; }
.sensors .val .now { background: #cce0fa; }
.sbar { margin-left: 11px; width: 28px; background: #f0f0f0; }
.sbar i { display: block; width: 11px; height: 200px; margin: 28px 0 0 7px; background: #858585; }

.disks { left: 854px; top: 405px; width: 900px; bottom: 163px; }
.volumes { flex: 1; margin: 12px 0 0 1px; background: #fff; border: 3px solid #747474; border-width: 3px 0 0 2px; }
.vhead { height: 27px; padding-left: 8px; border-bottom: 1px solid #8b8b8b; background: #f5f5f5; }
.volumes li { display: flex; align-items: center; gap: 5px; height: 26px; padding-left: 5px; }
.volumes li:nth-child(even) { height: 25px; }
.volumes li:first-child span { background: #efefef; }
.legend { display: flex; align-items: center; gap: 8px; height: 31px; margin-left: 1px; padding-left: 10px; background: #efefef; border-bottom: 2px solid #777; }
.legend i { width: 16px; height: 20px; background: #000; border-top: 2px solid #888; }
.disks footer { height: 37px; }

.dialog { left: 28px; top: 29px; width: 597px; font: 16px/20px "Liberation Sans", Arial, sans-serif; color: #000; padding-bottom: 11px; }
.dialog .title { font: 17px/24px "Open Sans", "Noto Sans", sans-serif; padding: 0 13px 0 12px; }
.dialog .title button { margin-left: 0; }
.ptabs { display: flex; align-items: flex-end; height: 30px; margin: 11px 10px 0; }
.ptabs button { height: 28px; padding: 0 7px; background: #f3f3f3; border: 1px solid #e8e8e8; border-bottom: 0; }
.ptabs .on { height: 30px; padding: 0 10px; background: #f9f9f9; }
.page { margin: 0 10px; height: 537px; background: #f9f9f9; border: 1px solid #e8e8e8; padding: 24px 18px; }
.device { display: flex; align-items: flex-start; gap: 20px; padding-left: 4px; height: 59px; white-space: nowrap; }
.device svg { margin-top: 8px; }
.dialog dl div { display: flex; height: 34px; align-items: center; padding-left: 70px; }
.dialog dt { width: 141px; }
.dialog fieldset { border: 1px solid #dfdfdf; height: 263px; margin-top: 19px; padding: 12px 17px 12px 15px; min-width: 0; }
.dialog legend { margin-left: -3px; padding: 0 2px; }
.status { display: flex; height: 170px; border: 1px solid #ececec; border-bottom: 2px solid #868686; }
.status textarea { flex: 1; min-width: 0; border: 0; outline: 0; resize: none; background: none; font: inherit; color: inherit; padding: 4px 4px; overflow: hidden; white-space: pre; }
.sb { width: 24px; margin: 2px; background: #f0f0f0; display: flex; flex-direction: column; justify-content: space-between; align-items: center; color: #8b8b8b; font-size: 10px; padding: 2px 0; }
.buttons { display: flex; justify-content: flex-end; gap: 11px; margin: 12px 10px 0; }
.buttons button { width: 110px; height: 32px; background: #fdfdfd; border: 1px solid #d0d0d0; border-radius: 3px; }

.viewer { left: 931px; right: 0; top: 51px; bottom: 33px; border-radius: 12px 0 0 12px; }
.viewer .title button { margin-right: 10px; }
.main { flex: 1; min-height: 0; display: flex; padding-top: 10px; }
.tree { width: 295px; display: flex; flex-direction: column; justify-content: space-between; background: #fff; border: 1px solid #828790; border-width: 2px 2px 2px 1px; overflow: hidden; padding-top: 2px; }
.tree li { display: flex; align-items: center; height: 27px; white-space: nowrap; padding-left: 6px; }
.tree .l1 { padding-left: 11px; }
.tree .l2 { padding-left: 39px; }
.chev { fill: none; }
.chev path { stroke-width: 2px; }
.node { display: flex; align-items: center; gap: 7px; height: 27px; flex: 1; padding-left: 1px; }
.l1 .node, .l2 .node { padding-left: 8px; }
.l2 .node { margin-left: 4px; padding-left: 4px; }
.sel .node { background: #d9d9d9; }
.hbar { height: 25px; background: #f0f0f0; padding: 5px 0 0 27px; }
.hbar i { display: block; width: 97px; height: 14px; background: #858585; }

.center { flex: 1; min-width: 0; margin: 0 5px 0 6px; display: flex; flex-direction: column; }
.center h1 { display: flex; align-items: center; gap: 28px; height: 34px; margin-right: 2px; padding: 2px 0 0 13px; background: #696969; color: #fff; font-size: 17px; font-weight: 400; white-space: nowrap; }
.center h1 b { font-size: 16px; }
.center h1 span { color: #e6e6e6; }
.listpane { height: 442px; margin-top: 2px; border-style: solid; border-width: 5px 2px 2px 5px; border-color: #757575 #fff #fff #7d7d7d; display: flex; flex-direction: column; }
.count { display: flex; align-items: center; gap: 23px; height: 46px; padding: 0 0 7px 6px; }
.grid { flex: 1; background: #fff; border: 2px solid #6f6f6f; }
.grid table { border-collapse: collapse; table-layout: fixed; width: 710px; }
.grid th { height: 36px; font-weight: 400; text-align: left; padding-left: 9px; border-right: 1px solid #e5e5e5; white-space: nowrap; }
.grid th:nth-child(1) { width: 149px; }
.grid th:nth-child(2) { width: 225px; }
.grid th:nth-child(3) { width: 156px; }
.grid th:nth-child(4), .grid th:nth-child(5) { width: 90px; }
.grid td { height: 28px; padding-left: 9px; white-space: nowrap; }
.grid tr:nth-child(even) td { height: 29px; }
.grid td:first-child { padding-left: 6px; }
.grid td div { display: flex; align-items: center; gap: 2px; height: 28px; }
.grid td div span { flex: 1; }
.grid .num { text-align: right; padding: 0 8px 0 0; }
.grid .sel td:not(:first-child), .grid .sel td div span { background: #efefef; }
.grid .sel td div span { line-height: 28px; }
.detail { flex: 1; min-height: 0; margin-top: 4px; border-style: solid; border-width: 3px 4px 3px 4px; border-color: #757575 #fafafa #fafafa #7d7d7d; display: flex; flex-direction: column; padding: 0 14px 14px 14px; }
.dhead { display: flex; align-items: center; justify-content: space-between; height: 33px; margin: 0 -10px; padding: 0 16px 0 6px; border-bottom: 3px solid #a3a3a3; color: #000; }
.dtabs { display: flex; align-items: flex-end; height: 34px; margin-top: 10px; color: #000; }
.dtabs button { height: 31px; width: 68px; border: 1px solid #e6e6e6; border-bottom: 0; background: #f3f3f3; }
.dtabs .on { height: 34px; width: 103px; background: #fafafa; border: 0; }
.dpage { flex: 1; min-height: 0; display: flex; flex-direction: column; border: 5px solid #fafafa; border-width: 3px 5px 5px; box-shadow: 0 0 0 1px #e8e8e8; padding: 22px 45px 34px 13px; }
.msg { flex: 1; margin-left: 4px; border-style: solid; border-width: 3px 2px 2px 2px; border-color: #757575 #e3e3e3 #fff #757575; padding: 3px 2px; }
.msg p { height: 22px; line-height: 22px; }
.msg p:nth-child(even) { height: 23px; }
.fields { display: grid; grid-template-columns: 198px 237px 172px 1fr; grid-auto-rows: 36px; align-items: center; margin-top: 16px; white-space: nowrap; color: #000; }
.fields .v { padding-top: 3px; color: #1b1b1b; }
.fields a { color: #0000ee; padding-left: 5px; }

.actions { width: 585px; background: #fff; border: 3px solid #747474; border-width: 3px 0 0 3px; overflow: hidden; }
.actions h2 { height: 32px; padding: 2px 0 0 8px; font-size: 16px; line-height: 30px; background: #f0f0f0; border-bottom: 2px solid #a8a8a8; color: #000; }
.group { margin-bottom: 8px; }
.group h3 { height: 38px; margin-bottom: 1px; padding: 3px 0 0 11px; font-size: 17px; font-weight: 400; line-height: 35px; background: linear-gradient(#b9d1ea, #98b4d2); white-space: nowrap; overflow: hidden; }
.group button { display: flex; align-items: center; gap: 15px; width: 100%; height: 36px; padding-left: 8px; text-align: left; }
.group hr { border: 0; height: 1px; margin-left: 8px; background: #e9e9e9; }
.statusbar { display: flex; justify-content: flex-end; height: 36px; flex: none; padding-top: 3px; border-top: 1px solid #fff; }
.statusbar i { width: 200px; border: 1px solid #dedede; border-width: 0 1px; margin-right: 2px; }

.manager { left: 1px; top: 745px; width: 1170px; box-shadow: 0 0 0 2px #9a9c9d, 0 14px 44px rgba(0, 0, 0, .4); }
.devices { display: flex; height: 694px; margin: 10px 3px 0 2px; overflow: hidden; background: #fff; border-top: 3px solid #7a7a7a; border-left: 2px solid #8a8a8a; }
.devices ul { flex: 1; padding-left: 36px; }
.devices li { display: flex; align-items: center; gap: 8px; height: 27px; white-space: nowrap; }
.devices .child { padding-left: 52px; }
.vbar { width: 26px; background: #f0f0f0; padding: 128px 0 0 5px; }
.vbar i { display: block; width: 15px; height: 433px; background: #858585; }
.manager .statusbar i { border-right: 0; margin: 0; }
.manager .statusbar i:last-child { width: 131px; border-right: 1px solid #dedede; margin-right: 3px; }
</style>
